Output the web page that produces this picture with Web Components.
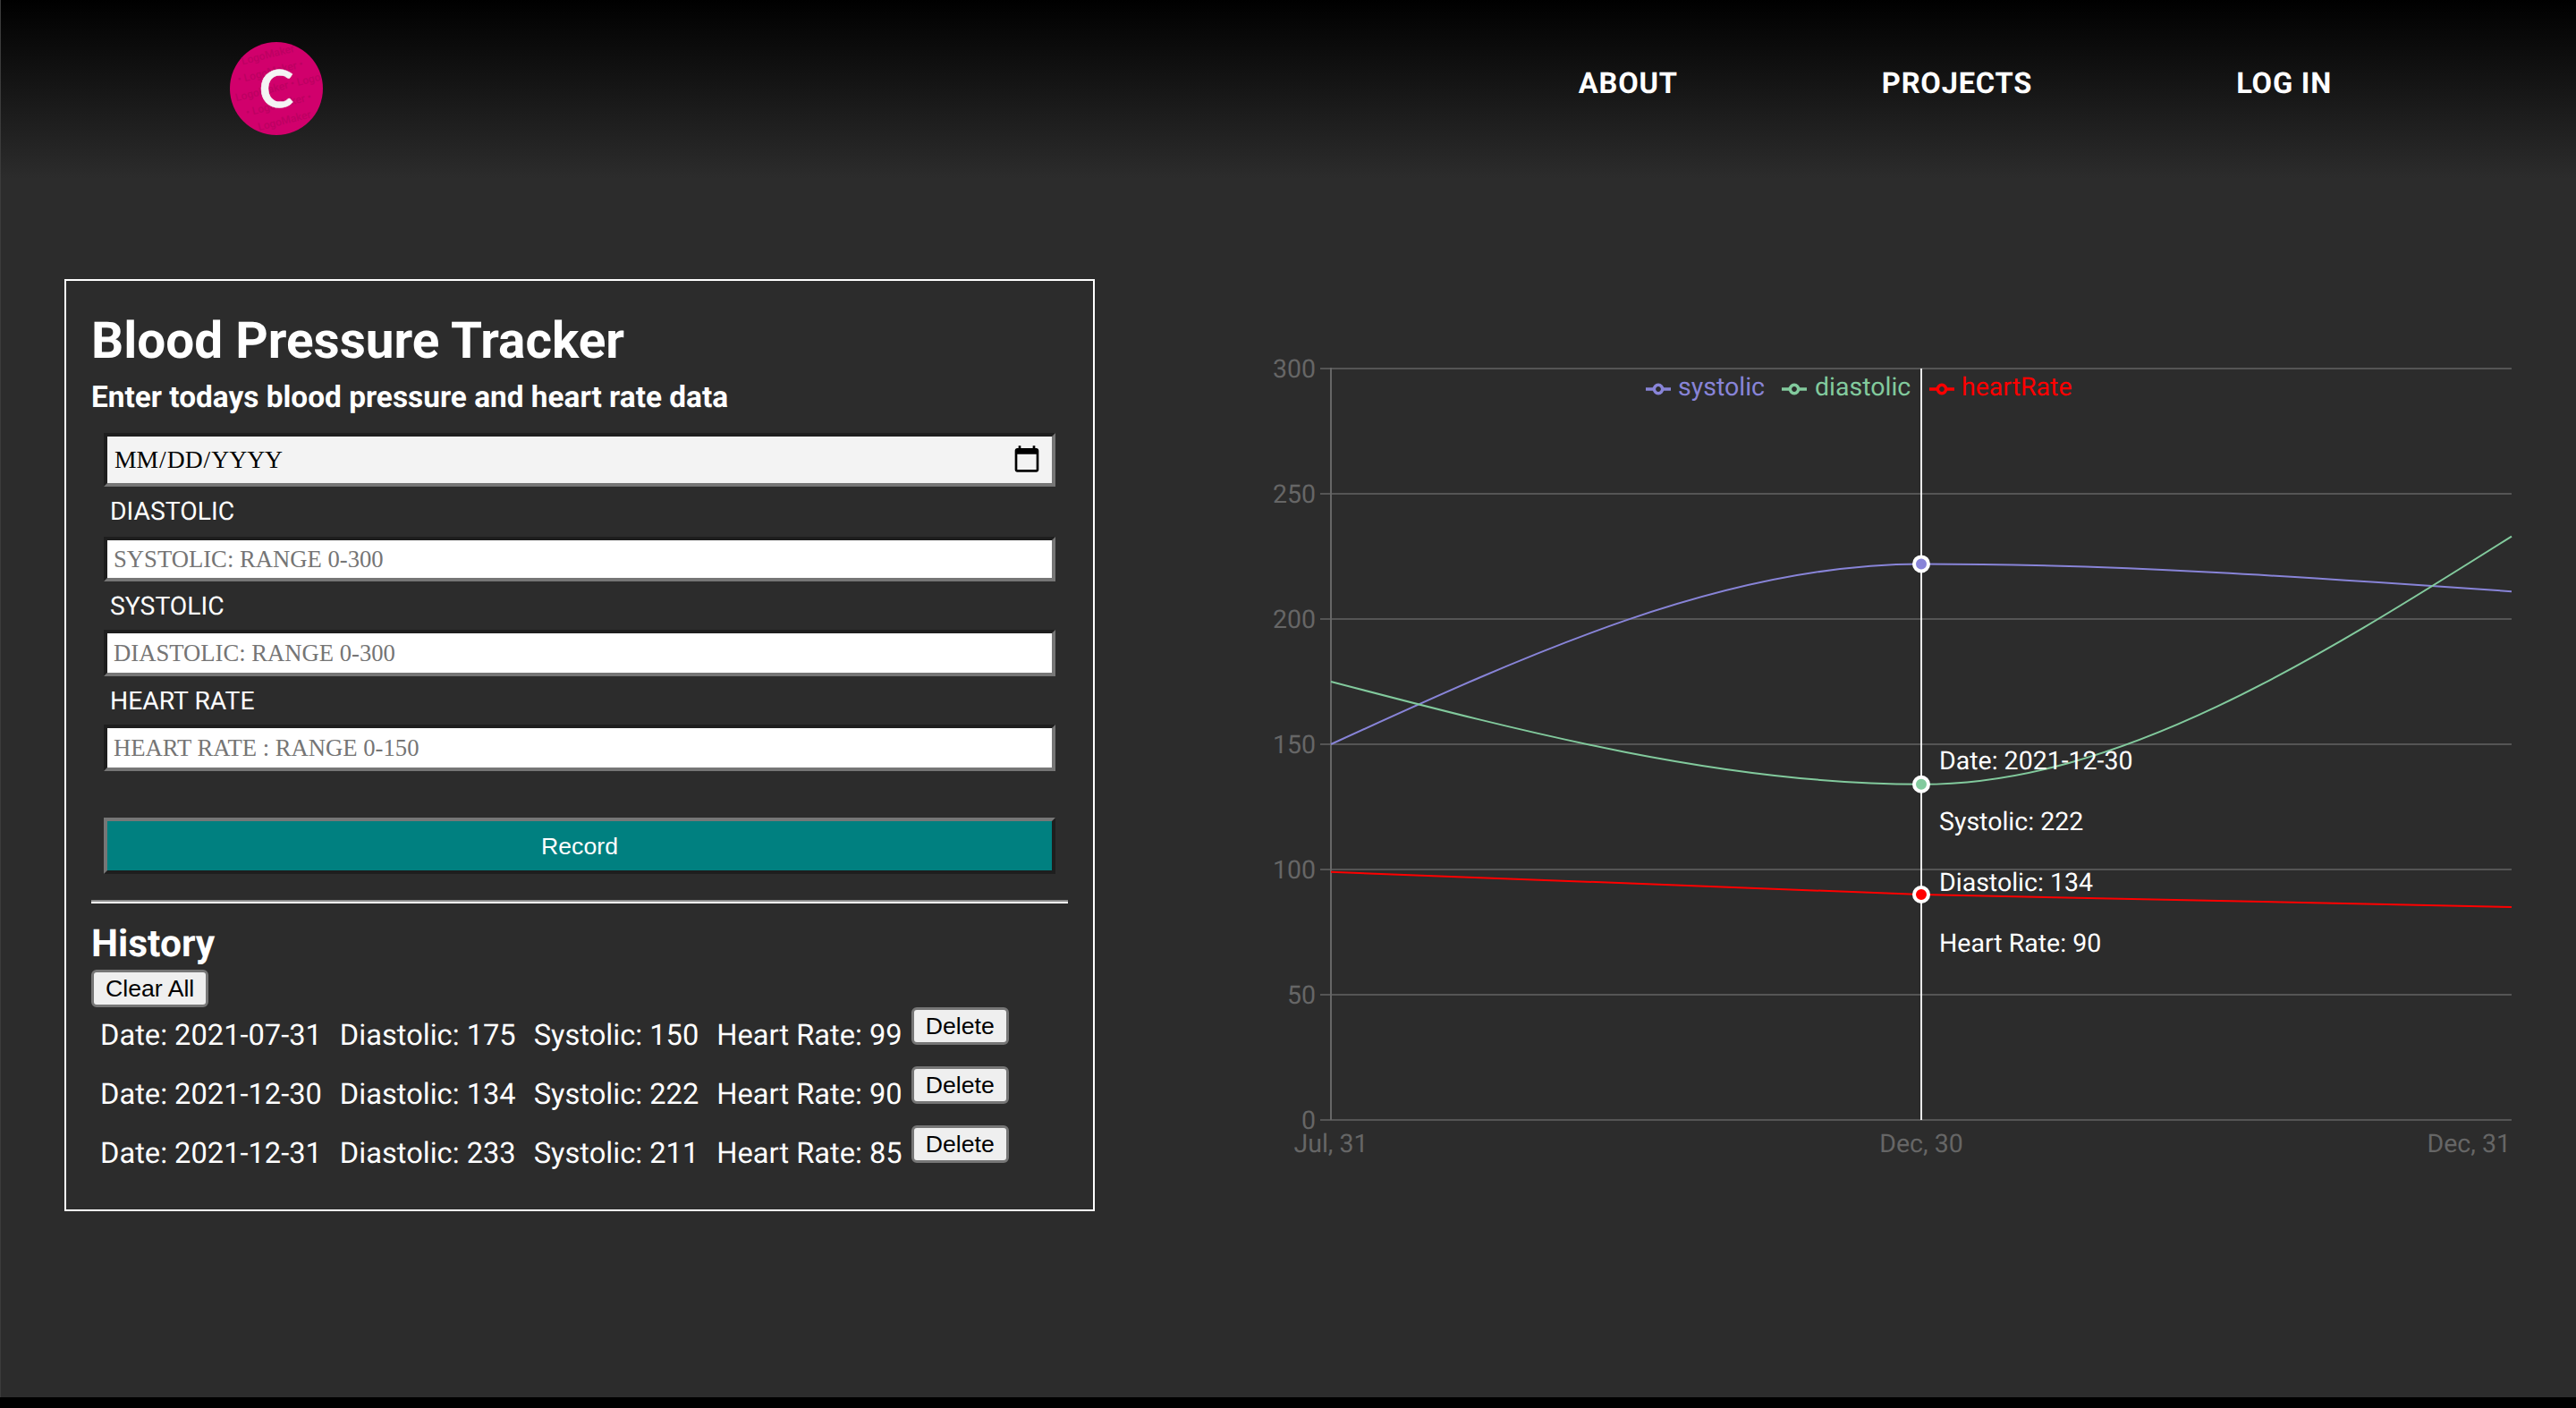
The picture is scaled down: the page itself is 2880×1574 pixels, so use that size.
<!DOCTYPE html>
<html lang="en">
<head>
<meta charset="utf-8">
<title>Blood Pressure Tracker</title>
<style>
    html, body { margin: 0; padding: 0; background: #000; }
</style>
</head>
<body>
<bp-app>
    <site-header slot="header">
        <nav-link>About</nav-link>
        <nav-link>Projects</nav-link>
        <nav-link>Log in</nav-link>
    </site-header>
    <tracker-card slot="card">
        <bp-field label="DIASTOLIC" placeholder="SYSTOLIC: RANGE 0-300" first></bp-field>
        <bp-field label="SYSTOLIC" placeholder="DIASTOLIC: RANGE 0-300"></bp-field>
        <bp-field label="HEART RATE" placeholder="HEART RATE : RANGE 0-150"></bp-field>
        <history-row slot="history" date="2021-07-31" diastolic="175" systolic="150" rate="99"></history-row>
        <history-row slot="history" date="2021-12-30" diastolic="134" systolic="222" rate="90"></history-row>
        <history-row slot="history" date="2021-12-31" diastolic="233" systolic="211" rate="85"></history-row>
    </tracker-card>
    <bp-chart slot="chart"></bp-chart>
</bp-app>

<script>
// components/bp-app.js
class BpApp extends HTMLElement {
    constructor() {
        super();
        this.attachShadow({ mode: "open" });
        this.shadowRoot.innerHTML = `
            <style>
                :host {
                    display: block;
                    box-sizing: border-box;
                    width: 2880px;
                    height: 1562px;
                    background: #2c2c2c;
                    border-left: 1px solid #3b3b3b;
                    overflow: hidden;
                    font-family: Roboto, sans-serif;
                    color: #fff;
                    text-rendering: geometricPrecision;
                }
                main {
                    display: flex;
                    align-items: flex-start;
                    gap: 156px;
                    padding: 112px 0 0 71px;
                }
            </style>
            <slot name="header"></slot>
            <main>
                <slot name="card"></slot>
                <slot name="chart"></slot>
            </main>
        `;
    }
}

// components/site-header.js
class SiteHeader extends HTMLElement {
    constructor() {
        super();
        this.attachShadow({ mode: "open" });
        this.shadowRoot.innerHTML = `
            <style>
                :host {
                    display: flex;
                    justify-content: space-between;
                    align-items: flex-start;
                    box-sizing: border-box;
                    height: 200px;
                    padding: 47px 273px 0 256px;
                    background: linear-gradient(#000, #2c2c2c);
                }
                nav {
                    display: flex;
                    gap: 228px;
                    padding-top: 27px;
                }
                svg { display: block; }
            </style>
            <svg width="104" height="104" viewBox="0 0 104 104">
                <circle cx="52" cy="52" r="52" fill="#d1006c"/>
                <g transform="rotate(-14 52 52)" fill="#bd0062" font-family="Roboto" font-size="12" font-weight="500" text-anchor="middle">
                    <text x="52" y="17">LogoMaker</text>
                    <text x="50" y="36">• LogoMaker •</text>
                    <text x="54" y="55">LogoMaker • Logo</text>
                    <text x="50" y="74">• LogoMaker •</text>
                    <text x="52" y="93">LogoMaker</text>
                </g>
                <text x="52" y="73" text-anchor="middle" fill="#f4f4f4" stroke="#f4f4f4" stroke-width="0.5" font-family="Lato" font-weight="700" font-size="58">C</text>
            </svg>
            <nav><slot></slot></nav>
        `;
    }
}

class NavLink extends HTMLElement {
    constructor() {
        super();
        this.attachShadow({ mode: "open" });
        this.shadowRoot.innerHTML = `
            <style>
                :host {
                    display: block;
                    font-size: 32.64px;
                    line-height: 38px;
                    font-weight: 700;
                    letter-spacing: 0.8px;
                    text-transform: uppercase;
                    color: #fff;
                }
            </style>
            <slot></slot>
        `;
    }
}

// components/tracker-card.js
class TrackerCard extends HTMLElement {
    constructor() {
        super();
        this.attachShadow({ mode: "open" });
        this.shadowRoot.innerHTML = `
            <style>
                :host {
                    display: block;
                    box-sizing: border-box;
                    width: 1152px;
                    height: 1042px;
                    padding: 34px 28px 0;
                    border: 2px solid #fff;
                }
                h1 {
                    margin: 0;
                    font-size: 56.7px;
                    line-height: 66px;
                    font-weight: 700;
                }
                h3 {
                    margin: 12px 0 0;
                    font-size: 33.4px;
                    line-height: 38px;
                    font-weight: 700;
                }
                form {
                    margin: 20px 14px 0;
                }
                input {
                    display: block;
                    box-sizing: border-box;
                    width: 100%;
                    margin: 0;
                    border-width: 4px;
                    border-style: solid;
                    border-color: #1e1e1e #767676 #767676 #1e1e1e;
                    border-radius: 0;
                    outline: none;
                    font-family: "Liberation Serif", serif;
                    font-size: 27.6px;
                }
                input[type=date] {
                    height: 60px;
                    padding: 0 11px 0 7px;
                    background: #f3f3f3;
                    color: #000;
                    text-transform: uppercase;
                }
                input[type=date]::-webkit-datetime-edit { padding: 0; text-transform: uppercase; }
                input[type=date]::-webkit-calendar-picker-indicator {
                    width: 34px;
                    height: 34px;
                    padding: 0;
                    margin: 0;
                }
                .record {
                    display: block;
                    box-sizing: border-box;
                    width: 100%;
                    height: 63px;
                    margin-top: 52px;
                    padding: 2px 0 0;
                    border-width: 4px;
                    border-style: solid;
                    border-color: #767676 #1e1e1e #1e1e1e #767676;
                    background: #008080;
                    color: #fff;
                    font-family: "Liberation Sans", Arial, sans-serif;
                    font-size: 26.67px;
                }
                hr {
                    box-sizing: border-box;
                    height: 4px;
                    margin: 29px 0 0;
                    border: 0;
                    border-top: 2px solid #8c8c8c;
                    border-bottom: 2px solid #fff;
                }
                h2 {
                    margin: 22px 0 0;
                    font-size: 42.5px;
                    line-height: 48px;
                    font-weight: 700;
                }
                .clear {
                    display: block;
                    box-sizing: border-box;
                    height: 42px;
                    margin-top: 4px;
                    padding: 0 13px;
                    border: 3px solid #767676;
                    border-radius: 6px;
                    background: #efefef;
                    color: #000;
                    font-family: "Liberation Sans", Arial, sans-serif;
                    font-size: 26.67px;
                }
            </style>
            <h1>Blood Pressure Tracker</h1>
            <h3>Enter todays blood pressure and heart rate data</h3>
            <form>
                <input type="date">
                <slot></slot>
                <button class="record" type="button">Record</button>
            </form>
            <hr>
            <h2>History</h2>
            <button class="clear" type="button">Clear All</button>
            <slot name="history"></slot>
        `;
    }
}

// components/bp-field.js
class BpField extends HTMLElement {
    constructor() {
        super();
        this.attachShadow({ mode: "open" });
        let first = this.hasAttribute("first");
        this.shadowRoot.innerHTML = `
            <style>
                :host { display: block; }
                label {
                    display: block;
                    width: fit-content;
                    margin: 0 0 ${first ? 12 : 10}px 7px;
                    padding-top: 11px;
                    font-size: 28.3px;
                    line-height: 33px;
                }
                input {
                    display: block;
                    box-sizing: border-box;
                    width: 100%;
                    height: ${first ? 50 : 52}px;
                    margin: 0;
                    padding: 0 7px;
                    border-width: 4px;
                    border-style: solid;
                    border-color: #1e1e1e #767676 #767676 #1e1e1e;
                    border-radius: 0;
                    outline: none;
                    background: #fff;
                    font-family: "Liberation Serif", serif;
                    font-size: 26.67px;
                }
                input::placeholder { color: #757575; opacity: 1; }
            </style>
            <label>${this.getAttribute("label")}</label>
            <input type="text" placeholder="${this.getAttribute("placeholder")}">
        `;
    }
}

// components/history-row.js
class HistoryRow extends HTMLElement {
    constructor() {
        super();
        this.attachShadow({ mode: "open" });
        this.shadowRoot.innerHTML = `
            <style>
                :host {
                    display: flex;
                    align-items: flex-start;
                    height: 66px;
                    padding-left: 10px;
                    font-size: 32.64px;
                    line-height: 38px;
                }
                span {
                    margin: 12px 20px 0 0;
                    white-space: nowrap;
                }
                span:last-of-type { margin-right: 10px; }
                button {
                    box-sizing: border-box;
                    height: 42px;
                    padding: 0 13px;
                    border: 3px solid #767676;
                    border-radius: 6px;
                    background: #efefef;
                    color: #000;
                    font-family: "Liberation Sans", Arial, sans-serif;
                    font-size: 26.67px;
                }
            </style>
            <span>Date: ${this.getAttribute("date")}</span>
            <span>Diastolic: ${this.getAttribute("diastolic")}</span>
            <span>Systolic: ${this.getAttribute("systolic")}</span>
            <span>Heart Rate: ${this.getAttribute("rate")}</span>
            <button type="button">Delete</button>
        `;
    }
}

// components/bp-chart.js
const LECTURAS = [
    { date: "Jul, 31", systolic: 150, diastolic: 175, rate: 99 },
    { date: "Dec, 30", systolic: 222, diastolic: 134, rate: 90 },
    { date: "Dec, 31", systolic: 211, diastolic: 233, rate: 85 }
];
const EJE_X = [1488, 2148, 2808];
const escalaY = v => 1252 - v * 2.8;

// same curve as d3 monotoneX
function curvaMonotona(valores) {
    let pts = valores.map((v, i) => [EJE_X[i], escalaY(v)]);
    let s = [];
    for (let i = 0; i < pts.length - 1; i++) {
        s.push((pts[i + 1][1] - pts[i][1]) / (pts[i + 1][0] - pts[i][0]));
    }
    let p = (s[0] + s[1]) / 2;
    let t1 = (Math.sign(s[0]) + Math.sign(s[1])) * Math.min(Math.abs(s[0]), Math.abs(s[1]), 0.5 * Math.abs(p)) || 0;
    let t0 = (3 * s[0] - t1) / 2;
    let t2 = (3 * s[1] - t1) / 2;
    let tramo = (a, b, ta, tb) => {
        let d = (b[0] - a[0]) / 3;
        return `C${a[0] + d},${a[1] + d * ta} ${b[0] - d},${b[1] - d * tb} ${b[0]},${b[1]}`;
    };
    return `M${pts[0][0]},${pts[0][1]} ${tramo(pts[0], pts[1], t0, t1)} ${tramo(pts[1], pts[2], t1, t2)}`;
}

class BpChart extends HTMLElement {
    constructor() {
        super();
        this.attachShadow({ mode: "open" });
        this.render();
    }

    render() {
        let series = [
            { key: "systolic", color: "#8884d8", iconX: 1840, textX: 1876 },
            { key: "diastolic", color: "#82ca9d", iconX: 1992, textX: 2029 },
            { key: "heartRate", field: "rate", color: "#ff0000", iconX: 2157, textX: 2193 }
        ];

        this.shadowRoot.innerHTML = `
            <style>
                :host {
                    display: block;
                    position: relative;
                    width: 1460px;
                    height: 920px;
                    margin-top: 78px;
                    font-family: Roboto, sans-serif;
                }
                svg { display: block; }
                text { font-size: 28.5px; }
                .tooltip {
                    position: absolute;
                    left: 788px;
                    top: 427px;
                    color: #fff;
                    font-size: 28.5px;
                    line-height: 68px;
                }
                .tooltip p { margin: 0; white-space: nowrap; }
            </style>
            <svg width="1460" height="920" viewBox="1380 390 1460 920">
                ${[0, 50, 100, 150, 200, 250, 300].map(v => `
                    <line x1="1476" x2="2808" y1="${escalaY(v)}" y2="${escalaY(v)}" stroke="#555" stroke-width="2"/>
                    <text x="1471" y="${escalaY(v) + 10}" text-anchor="end" fill="#666">${v}</text>
                `).join("")}
                <line x1="1488" x2="1488" y1="411" y2="1252" stroke="#666" stroke-width="2"/>
                <text x="1488" y="1288" text-anchor="middle" fill="#666">${LECTURAS[0].date}</text>
                <text x="2148" y="1288" text-anchor="middle" fill="#666">${LECTURAS[1].date}</text>
                <text x="2807" y="1288" text-anchor="end" fill="#666">${LECTURAS[2].date}</text>
                <line x1="2148" x2="2148" y1="412" y2="1252" stroke="#fff" stroke-width="2" opacity="0.9"/>
                ${series.map(s => `
                    <path d="${curvaMonotona(LECTURAS.map(l => l[s.field || s.key]))}" fill="none" stroke="${s.color}" stroke-width="2"/>
                    <circle cx="2148" cy="${escalaY(LECTURAS[1][s.field || s.key])}" r="8" fill="${s.color}" stroke="#fff" stroke-width="4"/>
                    <svg x="${s.iconX}" y="421" width="28" height="28" viewBox="0 0 32 32">
                        <path d="M0,16h10.67A5.33,5.33,0,1,1,21.33,16H32M21.33,16A5.33,5.33,0,1,1,10.67,16" fill="none" stroke="${s.color}" stroke-width="4"/>
                    </svg>
                    <text x="${s.textX}" y="442" fill="${s.color}">${s.key}</text>
                `).join("")}
            </svg>
            <div class="tooltip">
                <p>Date: 2021-12-30</p>
                <p>Systolic: 222</p>
                <p>Diastolic: 134</p>
                <p>Heart Rate: 90</p>
            </div>
        `;
    }
}

customElements.define("bp-app", BpApp);
customElements.define("site-header", SiteHeader);
customElements.define("nav-link", NavLink);
customElements.define("tracker-card", TrackerCard);
customElements.define("bp-field", BpField);
customElements.define("history-row", HistoryRow);
customElements.define("bp-chart", BpChart);
</script>
</body>
</html>
